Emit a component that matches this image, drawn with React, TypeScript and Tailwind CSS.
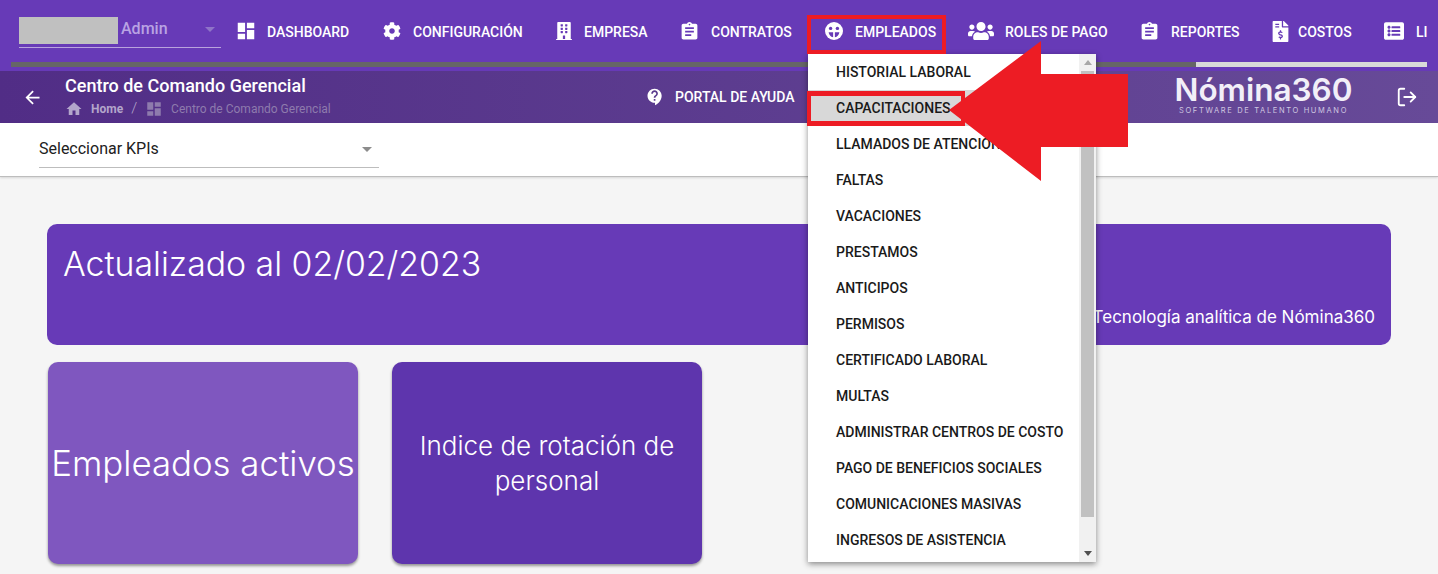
import { MdDashboard, MdAssignment, MdHome, MdArrowBack, MdContactSupport } from "react-icons/md";
import { FaBuilding, FaUsers, FaFileInvoiceDollar, FaListAlt, FaCog } from "react-icons/fa";
import { LogOut } from "lucide-react";

const roboto = "font-['Roboto','Liberation_Sans',sans-serif]";

const menu = [
  "HISTORIAL LABORAL",
  "CAPACITACIONES",
  "LLAMADOS DE ATENCIÓN",
  "FALTAS",
  "VACACIONES",
  "PRESTAMOS",
  "ANTICIPOS",
  "PERMISOS",
  "CERTIFICADO LABORAL",
  "MULTAS",
  "ADMINISTRAR CENTROS DE COSTO",
  "PAGO DE BENEFICIOS SOCIALES",
  "COMUNICACIONES MASIVAS",
  "INGRESOS DE ASISTENCIA",
];

function NavItem({ icon, label, className }: { icon: React.ReactNode; label: string; className: string }) {
  return (
    <div className={`flex shrink-0 items-center text-[14px] font-medium whitespace-nowrap text-white ${className}`}>
      {icon}
      <span>{label}</span>
    </div>
  );
}

function FaceIcon() {
  return (
    <svg className="mr-[12px] shrink-0 -translate-y-[1px]" width="18" height="18" viewBox="0 0 18 18">
      <circle cx="9" cy="9" r="9" fill="#ffffff" />
      <circle cx="5.6" cy="6.4" r="1.7" fill="#673ab7" />
      <circle cx="12.4" cy="6.4" r="1.7" fill="#673ab7" />
      <path d="M3.6 10.2 H8.1 V15.2 C5.6 14.8 4 12.8 3.6 10.2 Z" fill="#673ab7" />
      <path d="M9.9 10.2 H14.4 C14 12.8 12.4 14.8 9.9 15.2 Z" fill="#673ab7" />
    </svg>
  );
}

export default function App() {
  return (
    <div className={`relative h-[574px] w-[1438px] overflow-hidden bg-[#f5f5f5] ${roboto}`}>
      {/* Top navigation */}
      <div className="h-[71px] overflow-hidden bg-[#673ab7]">
        <div className="flex h-[62px] items-start pl-[19px]">
          <div className="relative mt-[17px] h-[31px] w-[202px] shrink-0 border-b border-[#b9a3dd]">
            <div className="flex items-start">
              <div className="h-[27px] w-[99px] bg-[#c0c0c0]" />
              <span className="ml-[3px] text-[16px] leading-[24px] font-medium text-[#b9a3e3]">Admin</span>
            </div>
            <div className="absolute top-[10px] right-[6px] h-0 w-0 border-x-[5px] border-t-[5px] border-x-transparent border-t-[#8f74c8]" />
          </div>
          <div className="ml-[17px] flex h-[62px] items-center pt-[2px]">
            <NavItem className="w-[145px]" icon={<MdDashboard className="mr-[10px] ml-[-3px] -translate-y-[1px] text-[22px]" />} label="DASHBOARD" />
            <NavItem className="w-[172px]" icon={<FaCog className="mr-[12px] -translate-y-[1px] text-[18px]" />} label="CONFIGURACIÓN" />
            <NavItem className="w-[127px]" icon={<FaBuilding className="mr-[11px] -translate-y-[1px] text-[18px]" />} label="EMPRESA" />
            <NavItem className="w-[143px]" icon={<MdAssignment className="mr-[11px] ml-[-3px] -translate-y-[1px] text-[21px]" />} label="CONTRATOS" />
            <NavItem className="w-[143px]" icon={<FaceIcon />} label="EMPLEADOS" />
            <NavItem className="w-[174px]" icon={<FaUsers className="mr-[11px] -translate-y-[1px] text-[26px]" />} label="ROLES DE PAGO" />
            <NavItem className="w-[128px]" icon={<MdAssignment className="mr-[11px] ml-[-3px] -translate-y-[1px] text-[21px]" />} label="REPORTES" />
            <NavItem className="w-[114px]" icon={<FaFileInvoiceDollar className="mr-[7px] -translate-y-[1px] text-[21px]" />} label="COSTOS" />
            <NavItem className="w-[60px]" icon={<FaListAlt className="mr-[12px] -translate-y-[1px] text-[20px]" />} label="LI" />
          </div>
        </div>
        <div className="mx-[11px] flex h-[5px] w-[1416px]">
          <div className="w-[1185px] bg-[#666666]" />
          <div className="flex-1 bg-[#d9d9d9]" />
        </div>
      </div>

      {/* Sub header */}
      <div className="flex h-[52px] items-center bg-gradient-to-r from-[#512d86] to-[#674a98] text-white">
        <MdArrowBack className="ml-[22px] shrink-0 text-[21px]" />
        <div className="ml-[22px] w-[580px] shrink-0 pb-[2px]">
          <div className="mb-[3px] text-[18px] leading-[22px] font-medium">Centro de Comando Gerencial</div>
          <div className="flex h-[18px] items-center text-[#b3a6cb]">
            <MdHome className="text-[18px]" />
            <span className="ml-[8px] text-[12px] font-bold">Home</span>
            <span className="mx-[8px] text-[15px] font-light">/</span>
            <MdDashboard className="text-[18px] text-[#8e7bad]" />
            <span className="ml-[8px] text-[12px] text-[#8e7bad]">Centro de Comando Gerencial</span>
          </div>
        </div>
        <MdContactSupport className="shrink-0 text-[20px]" />
        <span className="ml-[10px] w-[500px] shrink-0 text-[14px] font-medium">PORTAL DE AYUDA</span>
        <div className="flex w-[177px] shrink-0 flex-col items-center pb-[2px] font-['Inter','Open_Sans',sans-serif]">
          <span className="text-[31.5px] leading-[26px] font-semibold whitespace-nowrap text-[#f2eff8]">Nómina360</span>
          <span className="mt-[3px] text-[7.5px] leading-[9px] tracking-[1.65px] whitespace-nowrap text-[#cfc6e0]">SOFTWARE DE TALENTO HUMANO</span>
        </div>
        <LogOut size={22} strokeWidth={2} className="ml-[44px] shrink-0" />
      </div>

      {/* KPI select */}
      <div className="h-[54px] border-b border-[#bdbdbd] bg-white pl-[39px] shadow-[0_1px_2px_rgba(0,0,0,0.12)]">
        <div className="relative flex h-[45px] w-[340px] items-center border-b border-[#bdbdbd] pt-[8px] text-[16px] text-[#212121]">
          Seleccionar KPIs
          <div className="absolute top-[24px] right-[7px] h-0 w-0 border-x-[5px] border-t-[5px] border-x-transparent border-t-[#8c8c8c]" />
        </div>
      </div>

      {/* Content */}
      <div className="px-[47px] pt-[47px] font-['Inter','Open_Sans',sans-serif] text-white">
        <div className="flex h-[121px] w-[1344px] flex-col rounded-[10px] bg-[#673ab7] pr-[16px] pl-[16px]">
          <div className="mt-[18px] text-[33.8px] leading-[44px] font-light">Actualizado al 02/02/2023</div>
          <div className="mt-[20px] self-end text-[17px] leading-[22px] whitespace-nowrap">Tecnología analítica de Nómina360</div>
        </div>
        <div className="mt-[17px] ml-[1px] flex gap-[34px]">
          <div className="flex h-[202px] w-[310px] items-center justify-center rounded-[10px] bg-[#7f57bf] text-center text-[34.8px] font-light whitespace-nowrap shadow-[0_2px_3px_rgba(0,0,0,0.4)]">
            Empleados activos
          </div>
          <div className="flex h-[202px] w-[310px] items-center justify-center rounded-[10px] bg-[#5e35ad] px-[20px] text-center text-[26px] leading-[35px] font-light shadow-[0_2px_3px_rgba(0,0,0,0.4)]">
            Indice de rotación de personal
          </div>
        </div>
      </div>

      {/* Dropdown menu */}
      <div className="absolute top-[54px] left-[808px] flex h-[508px] w-[288px] bg-white shadow-[0_2px_6px_rgba(0,0,0,0.45)]">
        <div className="w-[271px]">
          {menu.map((m, i) => (
            <div
              key={m}
              className={`flex h-[36px] items-center pl-[28px] text-[14px] leading-none font-medium whitespace-nowrap text-[#1a1a1a] ${i === 1 ? "bg-[#d8d8d8]" : ""}`}
            >
              {m}
            </div>
          ))}
        </div>
        <div className="flex w-[17px] flex-col bg-[#f1f1f1]">
          <div className="flex h-[17px] items-center justify-center">
            <div className="h-0 w-0 border-x-[4px] border-b-[5px] border-x-transparent border-b-[#a8a8a8]" />
          </div>
          <div className="mx-auto h-[446px] w-[13px] bg-[#c1c1c1]" />
          <div className="mt-auto flex h-[17px] items-center justify-center">
            <div className="h-0 w-0 border-x-[4px] border-t-[5px] border-x-transparent border-t-[#505050]" />
          </div>
        </div>
      </div>

      {/* Red annotations */}
      <div className="absolute top-[15px] left-[807px] h-[39px] w-[139px] border-[4px] border-[#ed1c24]" />
      <div className="absolute top-[91px] left-[807px] h-[35px] w-[158px] border-x-[4px] border-t-[5px] border-b-[5px] border-[#ed1c24]" />
      <svg className="absolute top-[40px] left-[948px]" width="182" height="142" viewBox="0 0 182 142">
        <path d="M1 70 L93 1 L93 34 L180 34 L180 107 L93 107 L93 141 Z" fill="#ed1c24" />
      </svg>
    </div>
  );
}
